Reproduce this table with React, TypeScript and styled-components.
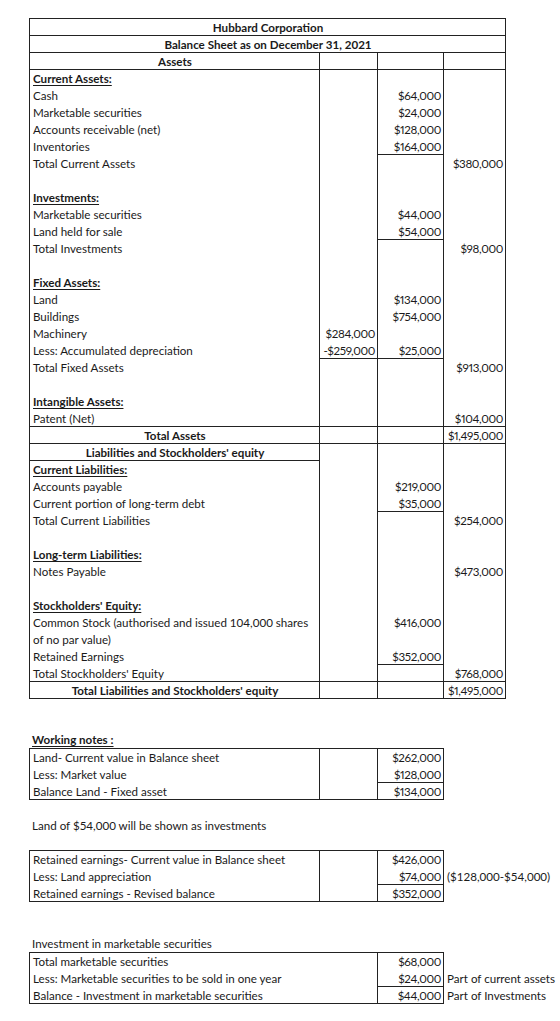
import React from "react";
import styled, { createGlobalStyle, css } from "styled-components";

const Global = createGlobalStyle`
  html, body { margin: 0; padding: 0; background: #fff; }
  body { font-family: Lato, "Liberation Sans", Arial, sans-serif; color: #1a1a1a; }
`;

const LINE = "#222";

const Page = styled.div`
  width: 560px;
  min-height: 1021px;
  box-sizing: border-box;
  padding: 18px 0 0 29px;
  display: flex;
  flex-direction: column;
  align-items: flex-start;
  font-size: 11.6px;
`;

const Grid = styled.div<{ $cols: string }>`
  display: grid;
  grid-template-columns: ${(p) => p.$cols};
  grid-auto-rows: 17px;
  border-top: 1px solid ${LINE};
  border-left: 1px solid ${LINE};
`;

const Cell = styled.div<{
  $r?: boolean;
  $b?: boolean;
  $align?: "left" | "center" | "right";
  $bold?: boolean;
  $u?: boolean;
  $span?: number;
}>`
  box-sizing: border-box;
  height: 17px;
  line-height: 17px;
  white-space: nowrap;
  padding: 0 2px 0 3px;
  text-align: ${(p) => p.$align || "left"};
  grid-column: span ${(p) => p.$span || 1};
  border-right: ${(p) => (p.$r ? `1px solid ${LINE}` : "0")};
  border-bottom: ${(p) => (p.$b ? `1px solid ${LINE}` : "0")};
  ${(p) =>
    p.$align === "right" &&
    css`
      padding: 0 2px 0 0;
      letter-spacing: -0.35px;
      font-variant-numeric: proportional-nums;
    `}
  ${(p) =>
    p.$bold &&
    css`
      font-weight: 700;
    `}
  ${(p) =>
    p.$u &&
    css`
      text-decoration: underline;
      text-underline-offset: 2px;
    `}
`;

const Spacer = styled.div<{ $h: number }>`
  height: ${(p) => p.$h}px;
  flex: none;
`;

const Line = styled.div<{ $bold?: boolean; $u?: boolean }>`
  height: 17px;
  line-height: 17px;
  padding-left: 3px;
  white-space: nowrap;
  font-weight: ${(p) => (p.$bold ? 700 : 400)};
  text-decoration: ${(p) => (p.$u ? "underline" : "none")};
  text-underline-offset: 2px;
`;

const BoxRow = styled.div`
  display: flex;
  align-items: flex-start;
`;

const Notes = styled.div`
  display: flex;
  flex-direction: column;
  padding-top: 1px;
`;

type Kind = "title" | "center" | "section";
interface SheetRow {
  a?: string;
  b?: string;
  c?: string;
  d?: string;
  kind?: Kind;
  bb?: string;
}

const rows: SheetRow[] = [
  { a: "Hubbard Corporation", kind: "title" },
  { a: "Balance Sheet as on December 31, 2021", kind: "title" },
  { a: "Assets", kind: "center", bb: "ABCD" },
  { a: "Current Assets:", kind: "section" },
  { a: "Cash", c: "$64,000" },
  { a: "Marketable securities", c: "$24,000" },
  { a: "Accounts receivable (net)", c: "$128,000" },
  { a: "Inventories", c: "$164,000", bb: "C" },
  { a: "Total Current Assets", d: "$380,000" },
  {},
  { a: "Investments:", kind: "section" },
  { a: "Marketable securities", c: "$44,000" },
  { a: "Land held for sale", c: "$54,000", bb: "C" },
  { a: "Total Investments", d: "$98,000" },
  {},
  { a: "Fixed Assets:", kind: "section" },
  { a: "Land", c: "$134,000" },
  { a: "Buildings", c: "$754,000" },
  { a: "Machinery", b: "$284,000" },
  { a: "Less: Accumulated depreciation", b: "-$259,000", c: "$25,000", bb: "BC" },
  { a: "Total Fixed Assets", d: "$913,000" },
  {},
  { a: "Intangible Assets:", kind: "section" },
  { a: "Patent (Net)", d: "$104,000", bb: "ABCD" },
  { a: "Total Assets", kind: "center", d: "$1,495,000", bb: "ABCD" },
  { a: "Liabilities and Stockholders' equity", kind: "center", bb: "A" },
  { a: "Current Liabilities:", kind: "section" },
  { a: "Accounts payable", c: "$219,000" },
  { a: "Current portion of long-term debt", c: "$35,000", bb: "C" },
  { a: "Total Current Liabilities", d: "$254,000" },
  {},
  { a: "Long-term Liabilities:", kind: "section" },
  { a: "Notes Payable", d: "$473,000" },
  {},
  { a: "Stockholders' Equity:", kind: "section" },
  { a: "Common Stock (authorised and issued 104,000 shares", c: "$416,000" },
  { a: "of no par value)" },
  { a: "Retained Earnings", c: "$352,000", bb: "C" },
  { a: "Total Stockholders' Equity", d: "$768,000", bb: "ABCD" },
  { a: "Total Liabilities and Stockholders' equity", kind: "center", d: "$1,495,000", bb: "ABCD" },
];

const COLS = ["a", "b", "c", "d"] as const;

function SheetRowView({ row }: { row: SheetRow }) {
  const bb = row.bb || "";
  if (row.kind === "title") {
    return (
      <Cell $span={4} $r $b $align="center" $bold>
        {row.a}
      </Cell>
    );
  }
  return (
    <>
      {COLS.map((col) => (
        <Cell
          key={col}
          $r
          $b={bb.includes(col.toUpperCase())}
          $align={col === "a" ? (row.kind === "center" ? "center" : "left") : "right"}
          $bold={col === "a" && (row.kind === "center" || row.kind === "section")}
          $u={col === "a" && row.kind === "section"}
        >
          {row[col]}
        </Cell>
      ))}
    </>
  );
}

interface NoteRow {
  a: string;
  c: string;
  bb?: boolean;
  note?: string;
}

function WorkBox({ items, merged }: { items: NoteRow[]; merged?: boolean }) {
  return (
    <BoxRow>
      <Grid $cols="290px 58px 66px">
        {items.map((it, i) => {
          const last = i === items.length - 1;
          return (
            <React.Fragment key={i}>
              {merged ? (
                <Cell $span={2} $r $b={last}>
                  {it.a}
                </Cell>
              ) : (
                <>
                  <Cell $r $b={last}>
                    {it.a}
                  </Cell>
                  <Cell $r $b={last} />
                </>
              )}
              <Cell $r $b={last || it.bb} $align="right">
                {it.c}
              </Cell>
            </React.Fragment>
          );
        })}
      </Grid>
      <Notes>
        {items.map((it, i) => (
          <Line key={i}>{it.note || ""}</Line>
        ))}
      </Notes>
    </BoxRow>
  );
}

export default function App() {
  return (
    <Page>
      <Global />
      <Grid $cols="290px 58px 66px 62px">
        {rows.map((r, i) => (
          <SheetRowView key={i} row={r} />
        ))}
      </Grid>
      <Spacer $h={32} />
      <Line $bold $u>
        Working notes :
      </Line>
      <WorkBox
        items={[
          { a: "Land- Current value in Balance sheet", c: "$262,000" },
          { a: "Less: Market value", c: "$128,000", bb: true },
          { a: "Balance Land - Fixed asset", c: "$134,000" },
        ]}
      />
      <Spacer $h={17} />
      <Line>Land of $54,000 will be shown as investments</Line>
      <Spacer $h={16} />
      <WorkBox
        items={[
          { a: "Retained earnings- Current value in Balance sheet", c: "$426,000" },
          { a: "Less: Land appreciation", c: "$74,000", bb: true, note: "($128,000-$54,000)" },
          { a: "Retained earnings - Revised balance", c: "$352,000" },
        ]}
      />
      <Spacer $h={33} />
      <Line>Investment in marketable securities</Line>
      <WorkBox
        merged
        items={[
          { a: "Total marketable securities", c: "$68,000" },
          {
            a: "Less: Marketable securities to be sold in one year",
            c: "$24,000",
            bb: true,
            note: "Part of current assets",
          },
          { a: "Balance - Investment in marketable securities", c: "$44,000", note: "Part of Investments" },
        ]}
      />
    </Page>
  );
}
